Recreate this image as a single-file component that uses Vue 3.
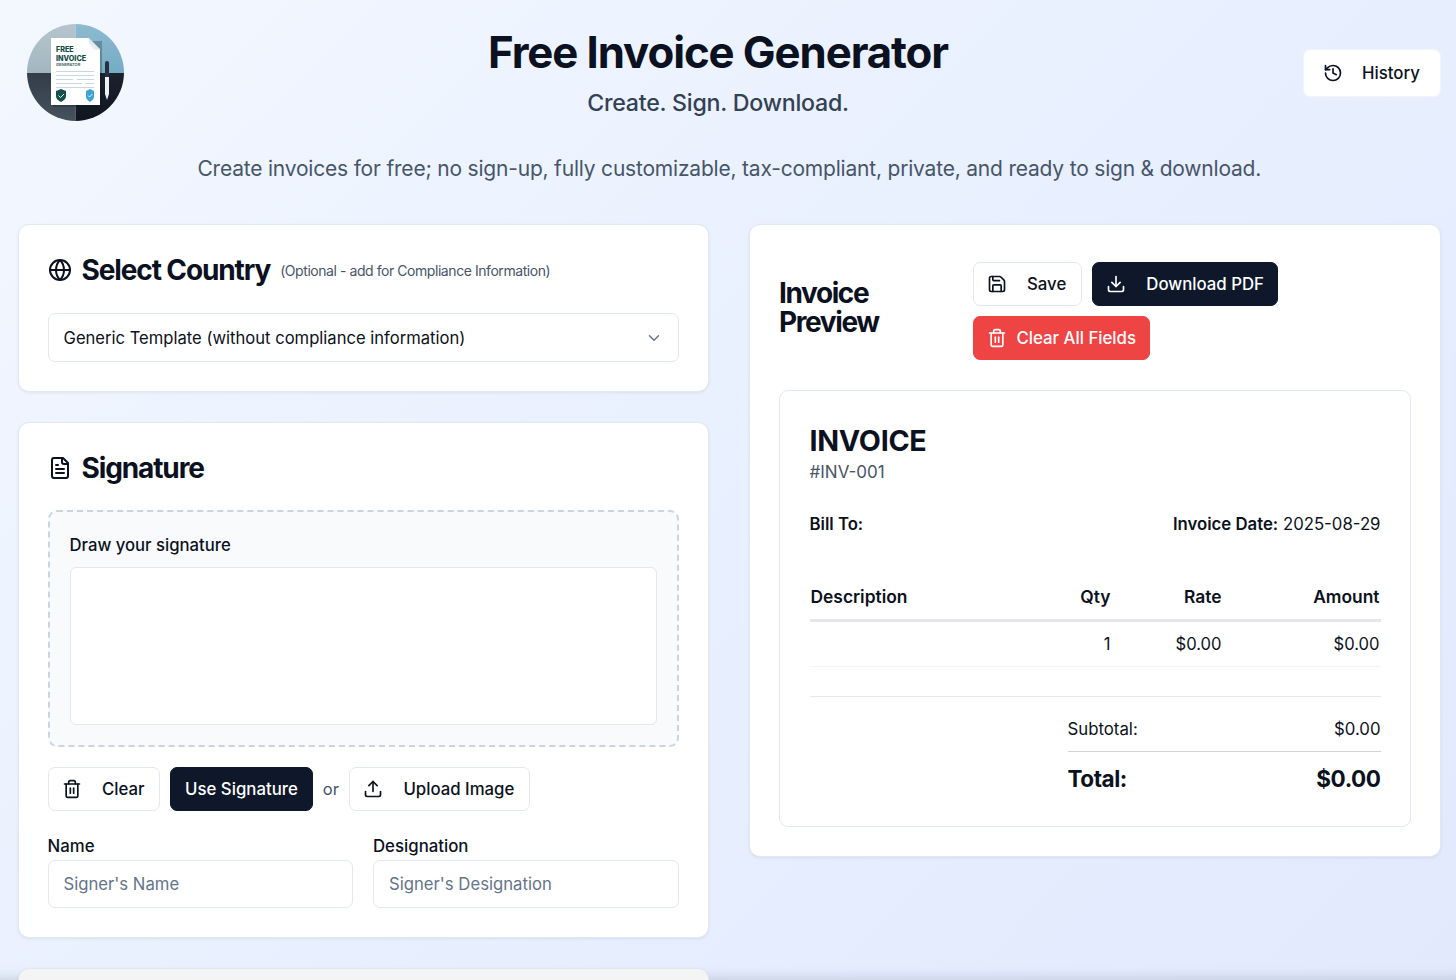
<script setup>
const icons = {
  history: ['M3 12a9 9 0 1 0 9-9 9.75 9.75 0 0 0-6.74 2.74L3 8', 'M3 3v5h5', 'M12 7v5l4 2'],
  globe: ['M22 12a10 10 0 1 1-20 0 10 10 0 0 1 20 0Z', 'M12 2a14.5 14.5 0 0 0 0 20 14.5 14.5 0 0 0 0-20', 'M2 12h20'],
  file: ['M15 2H6a2 2 0 0 0-2 2v16a2 2 0 0 0 2 2h12a2 2 0 0 0 2-2V7Z', 'M14 2v4a2 2 0 0 0 2 2h4', 'M10 9H8', 'M16 13H8', 'M16 17H8'],
  save: ['M15.2 3a2 2 0 0 1 1.4.6l3.8 3.8a2 2 0 0 1 .6 1.4V19a2 2 0 0 1-2 2H5a2 2 0 0 1-2-2V5a2 2 0 0 1 2-2z', 'M17 21v-7a1 1 0 0 0-1-1H8a1 1 0 0 0-1 1v7', 'M7 3v4a1 1 0 0 0 1 1h7'],
  download: ['M21 15v4a2 2 0 0 1-2 2H5a2 2 0 0 1-2-2v-4', 'M7 10l5 5 5-5', 'M12 15V3'],
  trash: ['M3 6h18', 'M19 6v14c0 1-1 2-2 2H7c-1 0-2-1-2-2V6', 'M8 6V4c0-1 1-2 2-2h4c1 0 2 1 2 2v2', 'M10 11v6', 'M14 11v6'],
  upload: ['M21 15v4a2 2 0 0 1-2 2H5a2 2 0 0 1-2-2v-4', 'M17 8l-5-5-5 5', 'M12 3v12'],
  chevron: ['m6 9 6 6 6-6'],
}
</script>

<template>
  <div class="page">
    <header class="top">
      <svg class="logo" viewBox="0 0 98 98" role="img" aria-label="Free Invoice Generator logo">
        <defs>
          <clipPath id="disc"><circle cx="48.500" cy="48.500" r="48.500" /></clipPath>
          <linearGradient id="tl" x1="0" y1="0" x2="0" y2="1"><stop offset="0" stop-color="#b6c5cd" /><stop offset="1" stop-color="#a3b6c0" /></linearGradient>
          <linearGradient id="tr" x1="0" y1="0" x2="0" y2="1"><stop offset="0" stop-color="#8dbad0" /><stop offset="1" stop-color="#76abc5" /></linearGradient>
          <linearGradient id="bl" x1="0" y1="0" x2="0" y2="1"><stop offset="0" stop-color="#333d4a" /><stop offset="1" stop-color="#47525f" /></linearGradient>
          <linearGradient id="br" x1="0" y1="0" x2="0" y2="1"><stop offset="0" stop-color="#1b222e" /><stop offset="1" stop-color="#10151f" /></linearGradient>
          <linearGradient id="curl" x1="0" y1="1" x2="1" y2="0"><stop offset="0" stop-color="#fdfefe" /><stop offset="1" stop-color="#c4d0d6" /></linearGradient>
        </defs>
        <g clip-path="url(#disc)">
          <rect width="48.500" height="49" fill="url(#tl)" />
          <rect x="48.500" width="49.500" height="49" fill="url(#tr)" />
          <rect y="49" width="48.500" height="49" fill="url(#bl)" />
          <rect x="48.500" y="49" width="49.500" height="49" fill="url(#br)" />
        </g>
        <rect x="26" y="17" width="49" height="66" fill="#0b1220" opacity=".25" />
        <path d="M24 14h38c1 6 5 10 11 11v56H24Z" fill="#fff" />
        <path d="M62 14l11 11c-3 2-7 1-9-2-2-3-3-6-2-9Z" fill="url(#curl)" />
        <text x="29" y="28" class="l1">FREE</text>
        <text x="29" y="36.500" class="l1">INVOICE</text>
        <text x="29" y="41.500" class="l2">GENERATOR</text>
        <path d="M29 47.500h38M29 51.500h38M29 55.500h17M50 55.500h17M29 59.500h26M58 59.500h9M29 63.500h38" stroke="#c3d3dc" stroke-width=".9" />
        <path d="M29 67l5-2 5 2v5c0 3-2 4.500-5 6-3-1.500-5-3-5-6Z" fill="#15504a" />
        <path d="M31.500 71.500l2 2 3.500-3.500" fill="none" stroke="#cfe" stroke-width="1" />
        <path d="M59 67l4-2 4 2v5c0 3-1.500 4.500-4 6-2.500-1.500-4-3-4-6Z" fill="#3fa3d0" />
        <path d="M61 71.500l1.500 1.500 3-3" fill="none" stroke="#dff" stroke-width=".9" />
        <rect x="78" y="37" width="4" height="17" rx="2" fill="#26303d" />
        <path d="M78 53h4v17l-2 6-2-6Z" fill="#eef2f4" />
      </svg>
      <div class="heading">
        <h1>Free Invoice Generator</h1>
        <p class="tag">Create. Sign. Download.</p>
      </div>
      <button class="btn history">
        <svg class="ic" viewBox="0 0 24 24"><path v-for="d in icons.history" :key="d" :d="d" /></svg>History
      </button>
    </header>

    <p class="lead">Create invoices for free; no sign-up, fully customizable, tax-compliant, private, and ready to sign &amp; download.</p>

    <main class="cols">
      <div class="stack">
        <section class="card">
          <div class="title">
            <svg class="ic ic-lg" viewBox="0 0 24 24"><path v-for="d in icons.globe" :key="d" :d="d" /></svg>
            <h2>Select Country</h2>
            <span class="hint">(Optional - add for Compliance Information)</span>
          </div>
          <div class="select">
            <span>Generic Template (without compliance information)</span>
            <svg class="ic chev" viewBox="0 0 24 24"><path v-for="d in icons.chevron" :key="d" :d="d" /></svg>
          </div>
        </section>

        <section class="card">
          <div class="title">
            <svg class="ic ic-lg" viewBox="0 0 24 24"><path v-for="d in icons.file" :key="d" :d="d" /></svg>
            <h2>Signature</h2>
          </div>
          <div class="sigbox">
            <div class="siglabel">Draw your signature</div>
            <div class="canvas"></div>
          </div>
          <div class="actions">
            <button class="btn">
              <svg class="ic" viewBox="0 0 24 24"><path v-for="d in icons.trash" :key="d" :d="d" /></svg>Clear
            </button>
            <button class="btn dark plain">Use Signature</button>
            <span class="or">or</span>
            <button class="btn">
              <svg class="ic" viewBox="0 0 24 24"><path v-for="d in icons.upload" :key="d" :d="d" /></svg>Upload Image
            </button>
          </div>
          <div class="fields">
            <label class="field">
              <span>Name</span>
              <div class="input">Signer's Name</div>
            </label>
            <label class="field">
              <span>Designation</span>
              <div class="input">Signer's Designation</div>
            </label>
          </div>
        </section>

        <section class="card stub"></section>
      </div>

      <section class="card preview">
        <div class="previewhead">
          <h2>Invoice Preview</h2>
          <div class="previewbtns">
            <button class="btn">
              <svg class="ic" viewBox="0 0 24 24"><path v-for="d in icons.save" :key="d" :d="d" /></svg>Save
            </button>
            <button class="btn dark">
              <svg class="ic" viewBox="0 0 24 24"><path v-for="d in icons.download" :key="d" :d="d" /></svg>Download PDF
            </button>
            <button class="btn red">
              <svg class="ic" viewBox="0 0 24 24"><path v-for="d in icons.trash" :key="d" :d="d" /></svg>Clear All Fields
            </button>
          </div>
        </div>

        <div class="invoice">
          <h3>INVOICE</h3>
          <div class="num">#INV-001</div>
          <div class="meta">
            <b>Bill To:</b>
            <span><b>Invoice Date:</b> 2025-08-29</span>
          </div>
          <table>
            <thead>
              <tr>
                <th class="d">Description</th>
                <th>Qty</th>
                <th>Rate</th>
                <th>Amount</th>
              </tr>
            </thead>
            <tbody>
              <tr>
                <td class="d"></td>
                <td>1</td>
                <td>$0.00</td>
                <td>$0.00</td>
              </tr>
            </tbody>
          </table>
          <div class="totals">
            <div class="sub"><span>Subtotal:</span><span>$0.00</span></div>
            <div class="total"><span>Total:</span><span>$0.00</span></div>
          </div>
        </div>
      </section>
    </main>
  </div>
</template>

<style>
html, body { margin: 0; }
body { overflow: hidden; }
</style>

<style scoped>
.page {
  box-sizing: border-box;
  height: 980px;
  overflow: hidden;
  padding: 24px 15px 0 17.500px;
  font-family: Inter, "Liberation Sans", sans-serif;
  color: #0b1120;
  background: linear-gradient(135deg, #f3f8ff 0%, #e9f0fe 45%, #e2e9fd 100%);
  box-shadow: inset 0 -14px 12px -12px rgba(71, 85, 105, .22);
}
.top { display: flex; align-items: flex-start; padding-left: 9px; }
.logo { width: 98px; height: 98px; flex: none; }
.l1 { font: 800 7.200px Inter, sans-serif; fill: #0f4a45; }
.l2 { font: 600 4px Inter, sans-serif; fill: #2d5a5a; }
.heading { flex: 1; text-align: center; padding-left: 8.500px; }
h1 { margin: 1px 0 0; font-size: 43.750px; line-height: 56px; font-weight: 700; letter-spacing: -0.025em; }
.tag { margin: 5px 0 0; font-size: 23.200px; line-height: 34px; color: #334155; font-weight: 500; letter-spacing: -0.01em; }
.lead { margin: 30px 0 0; height: 34px; text-align: center; font-size: 21px; line-height: 34px; color: #475569; letter-spacing: -0.2px; }
.cols { display: grid; grid-template-columns: 691px 691.500px; gap: 40.500px; margin-top: 38px; align-items: start; }
.stack { display: flex; flex-direction: column; gap: 30px; }
.card {
  box-sizing: border-box;
  background: #fff;
  border: 1px solid #e2e8f0;
  border-radius: 11px;
  padding: 29px;
  box-shadow: 0 1px 3px rgba(15, 23, 42, .07);
}
.stub { height: 60px; background: #f4f4f5; }
.title { display: flex; align-items: center; height: 32px; }
.title h2 { margin: 0 0 0 10px; font-size: 28px; line-height: 32px; font-weight: 700; letter-spacing: -0.04em; }
.hint { margin-left: 10px; font-size: 14px; color: #475569; letter-spacing: -0.44px; }
.ic { width: 20px; height: 20px; flex: none; fill: none; stroke: currentColor; stroke-width: 2; stroke-linecap: round; stroke-linejoin: round; }
.ic-lg { width: 24px; height: 24px; }
.select {
  box-sizing: border-box;
  height: 49px;
  margin-top: 27px;
  padding: 0 15px;
  display: flex;
  align-items: center;
  justify-content: space-between;
  border: 1px solid #e2e8f0;
  border-radius: 7px;
  font-size: 16.600px;
}
.chev { color: #64748b; width: 18px; height: 18px; }
.sigbox {
  box-sizing: border-box;
  height: 237px;
  margin-top: 26px;
  padding: 22px 20px 20px;
  border: 2px dashed #cbd5e1;
  border-radius: 9px;
  background: #f8fafc;
}
.siglabel { font-size: 16.700px; line-height: 22px; font-weight: 500; }
.canvas { margin-top: 11px; background: #fff; border: 1px solid #e2e8f0; border-radius: 6px; box-sizing: border-box; height: 158px; }
.actions { display: flex; align-items: center; gap: 10px; margin-top: 20px; }
.or { font-size: 16.500px; color: #475569; }
.btn {
  box-sizing: border-box;
  height: 44px;
  display: inline-flex;
  align-items: center;
  gap: 20.500px;
  padding: 0 14.500px 0 13px;
  border: 1px solid #e2e8f0;
  border-radius: 7px;
  background: #fff;
  color: #0b1120;
  font-family: inherit;
  font-size: 16.800px;
  font-weight: 500;
}
.dark { background: #0f172a; border-color: #0f172a; color: #fff; padding-right: 13px; }
.plain { padding: 0 14px; }
.red { background: #ef4444; border-color: #ef4444; color: #fff; gap: 10px; padding-right: 13px; }
.history { margin: 25px 0 0 0; width: 138px; height: 48px; padding: 0 19px; gap: 19px; border-color: #f1f5f9; }
.fields { display: grid; grid-template-columns: 1fr 1fr; gap: 20px; margin-top: 24px; }
.field { display: block; }
.field span { display: block; font-size: 16.800px; line-height: 22px; font-weight: 500; }
.input {
  box-sizing: border-box;
  height: 48px;
  margin-top: 3px;
  padding: 0 15px;
  display: flex;
  align-items: center;
  border: 1px solid #e2e8f0;
  border-radius: 7px;
  font-size: 16.700px;
  color: #64748b;
}
.preview { padding-bottom: 29px; }
.previewhead { display: flex; align-items: center; margin-top: 8px; }
.previewhead h2 { flex: none; width: 193.500px; margin: 0; padding-bottom: 6px; font-size: 28px; line-height: 29px; font-weight: 700; letter-spacing: -0.05em; }
.previewbtns { flex: 1; display: flex; flex-wrap: wrap; gap: 10px; }
.invoice {
  box-sizing: border-box;
  margin-top: 30px;
  height: 437px;
  padding: 30px 29px 29px 29.500px;
  border: 1px solid #e2e8f0;
  border-radius: 9px;
}
h3 { margin: 0; font-size: 28.700px; line-height: 39px; font-weight: 700; letter-spacing: -0.01em; }
.num { margin-top: 1px; font-size: 17px; line-height: 22px; color: #475569; }
.meta { display: flex; justify-content: space-between; margin-top: 30px; font-size: 16.750px; line-height: 22px; }
.meta b { font-weight: 600; }
table { width: 100%; margin-top: 40px; border-collapse: collapse; font-size: 16.600px; }
th { text-align: right; font-size: 17.400px; font-weight: 600; height: 45px; padding: 0 1px; border-bottom: 3px solid #e5e7eb; box-sizing: border-box; }
td { text-align: right; height: 46px; padding: 0 1px; border-bottom: 1px solid #f3f4f6; box-sizing: border-box; }
th.d, td.d { text-align: left; }
th:nth-child(2), td:nth-child(2) { width: 90px; }
th:nth-child(3), td:nth-child(3) { width: 111px; }
th:nth-child(4), td:nth-child(4) { width: 158px; }
.totals { margin: 29px 0 0 258px; position: relative; }
.totals::before { content: ""; position: absolute; left: -258px; right: 0; top: 0; border-top: 1px solid #e5e7eb; }
.sub { display: flex; justify-content: space-between; height: 56px; padding-top: 12px; align-items: center; font-size: 16.800px; border-bottom: 1px solid #cfd2d9; box-sizing: border-box; }
.total { display: flex; justify-content: space-between; height: 54px; align-items: center; font-size: 22.500px; font-weight: 700; letter-spacing: -0.02em; }
</style>
